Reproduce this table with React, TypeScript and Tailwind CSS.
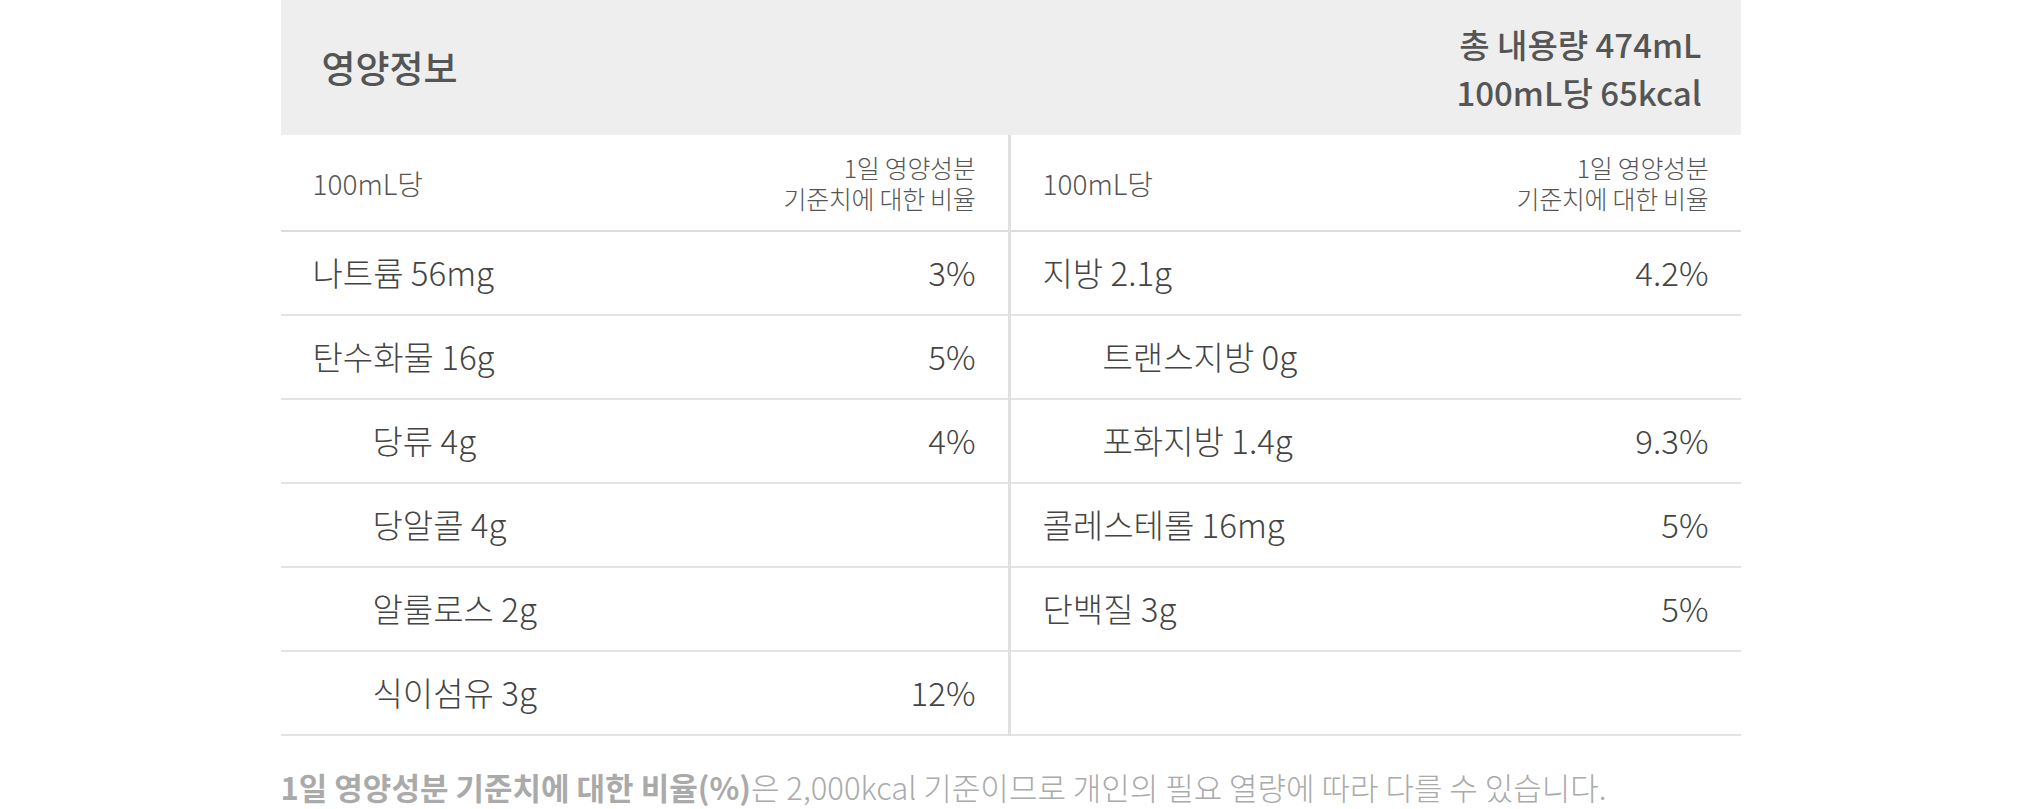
import React from "react";

interface Row {
  name: string;
  value?: string;
  sub?: boolean;
}

const leftRows: Row[] = [
  { name: "나트륨 56mg", value: "3%" },
  { name: "탄수화물 16g", value: "5%" },
  { name: "당류 4g", value: "4%", sub: true },
  { name: "당알콜 4g", sub: true },
  { name: "알룰로스 2g", sub: true },
  { name: "식이섬유 3g", value: "12%", sub: true },
];

const rightRows: Row[] = [
  { name: "지방 2.1g", value: "4.2%" },
  { name: "트랜스지방 0g", sub: true },
  { name: "포화지방 1.4g", value: "9.3%", sub: true },
  { name: "콜레스테롤 16mg", value: "5%" },
  { name: "단백질 3g", value: "5%" },
  { name: "", value: "" },
];

const font = { fontFamily: '"Noto Sans CJK KR", "Noto Sans", sans-serif' };

const Column: React.FC<{ rows: Row[]; left?: boolean }> = ({ rows, left }) => (
  <div className={left ? "border-r-[3px] border-[#e0e0e0]" : ""}>
    <div className="h-[97px] flex items-center justify-between px-[32px] border-b-[2px] border-[#dcdcdc]">
      <span className="text-[28px] font-light text-[#555]">100mL당</span>
      <div className="flex flex-col items-end gap-[1px] text-[25px] leading-[30px] font-light tracking-[-0.3px] text-[#555]">
        <span>1일 영양성분</span>
        <span>기준치에 대한 비율</span>
      </div>
    </div>
    {rows.map((row, i) => (
      <div
        key={i}
        className="h-[84px] flex items-center justify-between px-[32px] border-b-[2px] border-[#e4e4e4]"
      >
        <span className={`text-[33px] font-light text-[#444] ${row.sub ? "pl-[60px]" : ""}`}>
          {row.name}
        </span>
        <span className="text-[33px] font-light text-[#444]">{row.value}</span>
      </div>
    ))}
  </div>
);

export default function App() {
  return (
    <div className="w-full bg-white" style={font}>
      <div className="w-[1460px] mx-auto">
        <div className="h-[135px] bg-[#eeeeee] flex items-center justify-between pl-[41px] pr-[39px]">
          <span className="text-[37px] font-medium text-[#555]">영양정보</span>
          <div className="text-right text-[33px] leading-[48px] font-medium text-[#555]">
            <div>총 내용량 474mL</div>
            <div>100mL당 65kcal</div>
          </div>
        </div>
        <div className="grid grid-cols-2">
          <Column rows={leftRows} left />
          <Column rows={rightRows} />
        </div>
        <p className="mt-[31px] text-[31px] leading-[40px] text-[#aaa] font-light whitespace-nowrap">
          <span className="font-bold">1일 영양성분 기준치에 대한 비율(%)</span>은 2,000kcal 기준이므로 개인의 필요 열량에 따라 다를 수 있습니다.
        </p>
      </div>
    </div>
  );
}
